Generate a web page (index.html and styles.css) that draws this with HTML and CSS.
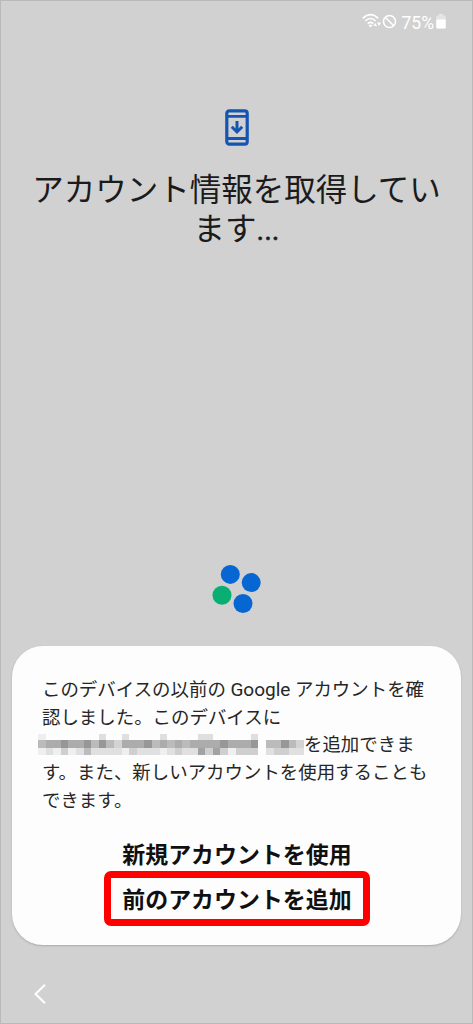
FILE: index.html
```html
<!DOCTYPE html>
<html lang="ja">
<head>
<meta charset="utf-8">
<title>アカウント情報</title>
<link rel="stylesheet" href="styles.css">
</head>
<body>
<main class="screen">
  <header class="status">
    <svg class="wifi" width="20" height="16" viewBox="0 0 20 16" fill="none" stroke="#fff" stroke-width="1.6"><path d="M.8 5.3Q8.500-2 16.200 5.300M3.300 8Q8.500 3 13.700 8M5.700 10.700Q8.500 8.200 11.300 10.700"/><path d="M6.500 12.300Q8.500 10.800 10.500 12.300L8.500 14.500ZM11.300 13l1.900-3 1.900 3zM15 9.500h4l-2 3.500z" fill="#fff" stroke="none"/></svg>
    <svg class="block" width="15" height="15" viewBox="0 0 15 15" fill="none" stroke="#fff" stroke-width="1.6"><circle cx="7.500" cy="7.500" r="6"/><path d="M3.300 3.300l8.400 8.400"/></svg>
    <span class="percent">75%</span>
    <svg class="battery" width="10" height="15" viewBox="0 0 10 15"><path d="M3 0h4v2H3z" fill="#e8e8e8"/><rect x=".3" y="1.500" width="9.400" height="13" rx="1" fill="#e4e4e4"/><path d="M.3 5.500h9.400v8a1 1 0 0 1-1 1H1.300a1 1 0 0 1-1-1z" fill="#fff"/></svg>
  </header>
  <section class="hero">
    <svg class="phone" width="24" height="37" viewBox="0 0 24 37" fill="none" stroke="#1455b4" stroke-width="3.200"><rect x="1.800" y="1.800" width="20.400" height="33.400" rx="2.500"/><path d="M2 7.300h20M2 29.500h20" stroke-width="2.800"/><path d="M12 12v10" stroke-width="3"/><path d="M6.800 17.800l5.200 5.200 5.200-5.200" stroke-width="3"/></svg>
    <h1 class="title"><span class="line">アカウント情報を取得してい</span><span class="line">ます<span class="dots">...</span></span></h1>
  </section>
  <svg class="spinner" width="50" height="50" viewBox="0 0 50 50"><g fill="#0667d2"><circle cx="18.300" cy="10.400" r="9.500"/><circle cx="39.200" cy="18.600" r="9.500"/><circle cx="31" cy="39.500" r="9.500"/></g><circle cx="10" cy="31.300" r="9.500" fill="#08ae72"/></svg>
  <section class="dialog">
    <p class="message">このデバイスの以前の <span class="latin">Google</span> アカウントを確<br>認しました。このデバイスに<br><svg class="mask" width="266" height="21" viewBox="0 0 35 21" preserveAspectRatio="none" shape-rendering="crispEdges">
      <path fill="#eee" d="M0 0h1v6H0z"/><path fill="#dfdfdf" d="M8 0h1v6H8zM11 0h1v6h-1zM16 0h1v6h-1zM21 0h2v6h-2zM28 0h1v6h-1z"/>
      <path fill="#acacac" d="M0 6h29v7.500H0z"/><path fill="#bbb" d="M0 6h1v7.500H0zM7 6h1v7.500H7zM9 6h1v7.500H9zM15 6h1v7.500h-1zM17 6h1v7.500h-1zM19 6h1v7.500h-1zM30 6h5v7.500h-5z"/><path fill="#d3d3d3" d="M10 6h1v7.500h-1zM34 6h1v7.500h-1z"/><path fill="#979797" d="M3 6h1v7.500H3zM6 6h1v7.500H6zM8 6h1v7.500H8zM14 6h1v7.500h-1zM24 6h1v7.500h-1zM28 6h1v7.500h-1zM32 6h1v7.500h-1z"/>
      <path fill="#e0e0e0" d="M0 13.500h29V21H0zM30 13.500h5V21h-5z"/><path fill="#efefef" d="M0 13.500h1V21H0zM2 13.500h1V21H2zM4 13.500h1V21H4zM11 13.500h1V21h-1zM16 13.500h1V21h-1zM25 13.500h1V21h-1z"/><path fill="#cfcfcf" d="M3 13.500h1V21H3zM12 13.500h1V21h-1zM18 13.500h1V21h-1zM22 13.500h1V21h-1zM24 13.500h1V21h-1zM26 13.500h3V21h-3zM31 13.500h2V21h-2z"/><path fill="#bcbcbc" d="M6 13.500h1V21H6z"/><path fill="#a2a2a2" d="M21 13.500h1V21h-1zM23 13.500h1V21h-1z"/>
    </svg>を追加できま<br>す。また、新しいアカウントを使用することも<br>できます。</p>
    <div class="actions">
      <button class="action">新規アカウントを使用</button>
      <button class="action highlighted">前のアカウントを追加</button>
    </div>
  </section>
  <footer class="navigation">
    <svg width="12" height="20" viewBox="0 0 12 20" fill="none" stroke="#fff" stroke-width="2"><path d="M11 .8L1.500 10l9.500 9.200"/></svg>
  </footer>
</main>
</body>
</html>
```
FILE: styles.css
```css
* { box-sizing: border-box; }
body { margin: 0; font-family: Roboto, "Noto Sans CJK JP", sans-serif; }
.screen {
  width: 473px; height: 1024px; overflow: hidden;
  display: flex; flex-direction: column;
  background: #d1d1d1; border: 1px solid #b9b9b9;
}
.status {
  height: 40px; flex: none; padding: 0 26px 0 0;
  display: flex; justify-content: flex-end; align-items: center; color: #fff;
}
.wifi { margin-right: -1px; }
.block { margin-left: 1px; margin-right: 5px; }
.percent { font-size: 17.500px; line-height: 20px; margin-top: 3px; margin-right: 2px; }
.hero { height: 523px; flex: none; padding-top: 68px; display: flex; flex-direction: column; align-items: center; }
.phone { display: block; flex: none; }
.title {
  margin: 22px 0 0; font-family: "Noto Sans CJK JP", sans-serif;
  font-size: 31.500px; line-height: 39px; font-weight: 400; color: #1b1b1b;
  text-align: center; white-space: nowrap;
}
.line { display: block; height: 39px; }
.dots { font-family: Roboto, sans-serif; font-size: 29px; line-height: 1; -webkit-text-stroke: .5px #1b1b1b; }
.spinner { display: block; flex: none; margin-left: 211px; }
.dialog {
  width: 449px; height: 299px; flex: none; margin: 32px 0 0 11px; padding: 31px 0 0 30px;
  background: #fdfdfd; border-radius: 31px; box-shadow: 0 1px 2px #aaa;
}
.message {
  margin: 0; font-size: 18.450px; line-height: 27.700px; font-weight: 400;
  color: #262626; white-space: nowrap;
}
.latin { font-size: 19px; line-height: 1; }
.mask { display: inline-block; margin-left: -4px; vertical-align: -4px; }
.actions { margin: 21px 0 0 62px; width: 266px; display: flex; flex-direction: column; align-items: center; }
.action {
  padding: 0; border: 0; background: transparent; color: #101010; white-space: nowrap;
  font: bold 22.950px/32px "Noto Sans CJK JP", sans-serif;
}
.highlighted { margin-top: 2px; width: 266px; height: 55px; border: 7px solid #f00; border-radius: 7px; line-height: 40px; }
.navigation { padding: 39px 0 0 33px; }
.navigation svg { display: block; }
```
